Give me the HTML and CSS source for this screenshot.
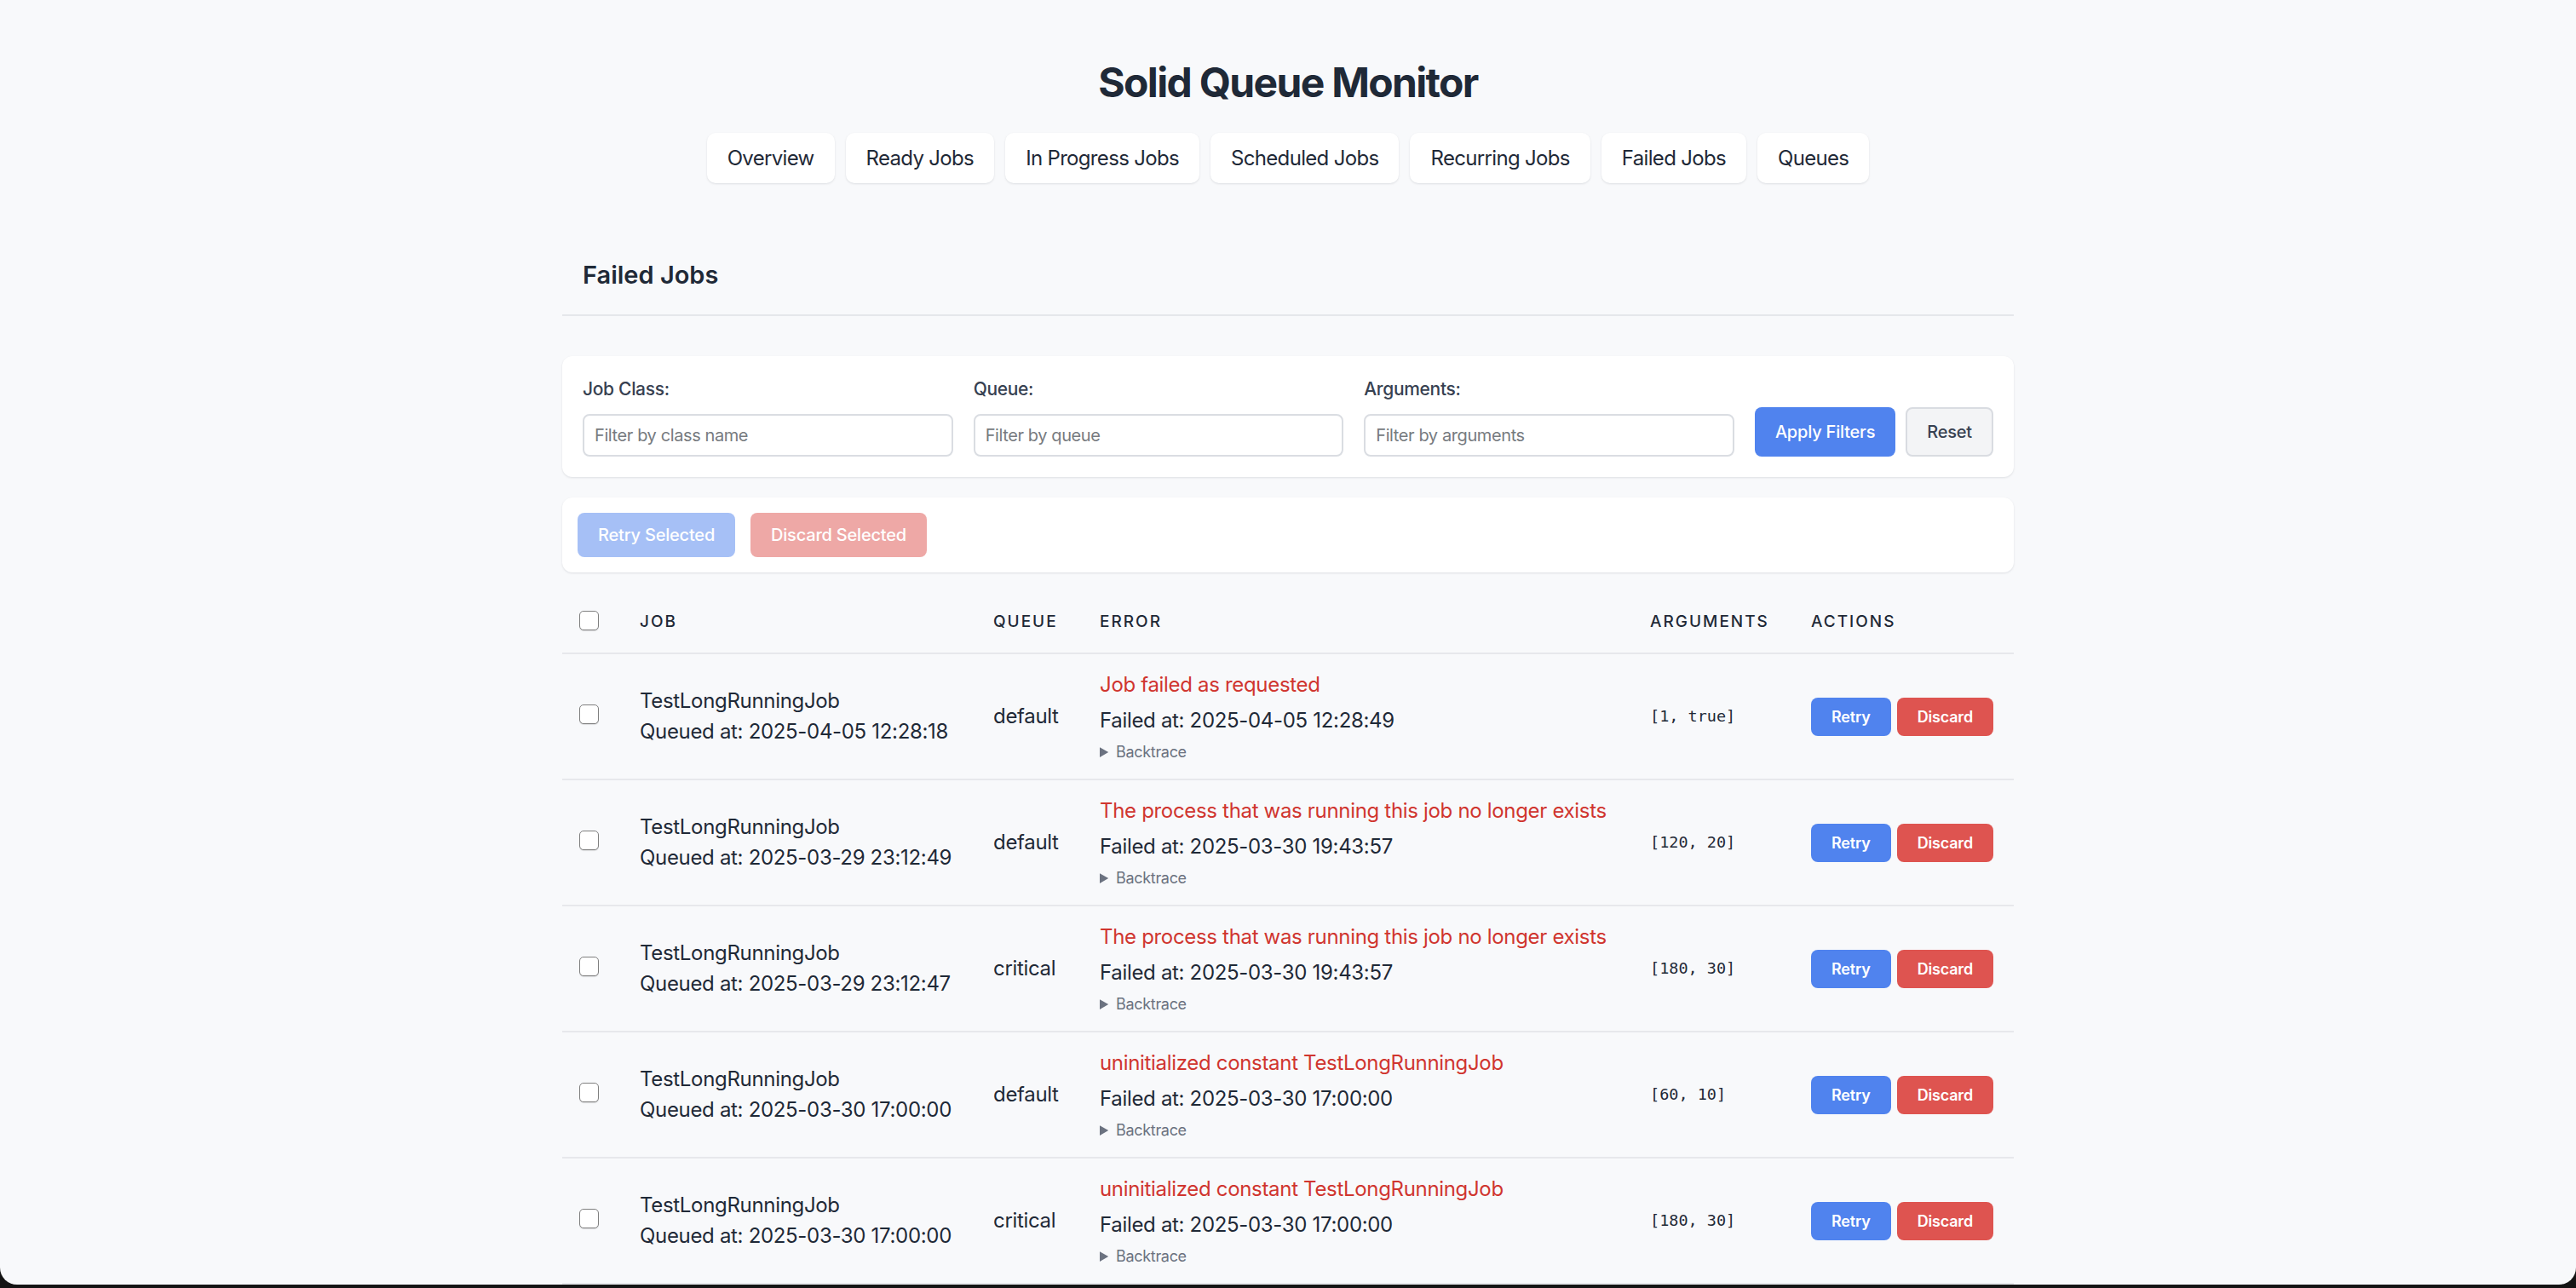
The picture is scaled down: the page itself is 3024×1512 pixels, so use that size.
FILE: index.html
```html
<!DOCTYPE html>
<html lang="en">
<head>
<meta charset="utf-8">
<title>Solid Queue Monitor</title>
<link rel="stylesheet" href="styles.css">
</head>
<body>
<div class="page">
  <header class="app-header">
    <h1 class="app-title">Solid Queue Monitor</h1>
    <nav class="nav">
      <a class="nav-link" href="#">Overview</a>
      <a class="nav-link" href="#">Ready Jobs</a>
      <a class="nav-link" href="#">In Progress Jobs</a>
      <a class="nav-link" href="#">Scheduled Jobs</a>
      <a class="nav-link" href="#">Recurring Jobs</a>
      <a class="nav-link" href="#">Failed Jobs</a>
      <a class="nav-link" href="#">Queues</a>
    </nav>
  </header>

  <section class="section">
    <div class="section-header">
      <h2 class="section-title">Failed Jobs</h2>
    </div>

    <div class="card filter-card">
      <form class="filter-form">
        <div class="filter-group">
          <label class="filter-label">Job Class:</label>
          <input class="filter-input" type="text" placeholder="Filter by class name">
        </div>
        <div class="filter-group">
          <label class="filter-label">Queue:</label>
          <input class="filter-input" type="text" placeholder="Filter by queue">
        </div>
        <div class="filter-group">
          <label class="filter-label">Arguments:</label>
          <input class="filter-input" type="text" placeholder="Filter by arguments">
        </div>
        <div class="filter-actions">
          <button type="button" class="btn btn-apply">Apply Filters</button>
          <button type="button" class="btn btn-reset">Reset</button>
        </div>
      </form>
    </div>

    <div class="card bulk-card">
      <button type="button" class="btn btn-bulk btn-bulk-retry">Retry Selected</button>
      <button type="button" class="btn btn-bulk btn-bulk-discard">Discard Selected</button>
    </div>

    <table class="jobs-table">
      <colgroup>
        <col class="col-check">
        <col class="col-job">
        <col class="col-queue">
        <col class="col-error">
        <col class="col-args">
        <col class="col-actions">
      </colgroup>
      <thead>
        <tr>
          <th class="cell-check"><input type="checkbox" class="checkbox checkbox-head"></th>
          <th>Job</th>
          <th>Queue</th>
          <th>Error</th>
          <th>Arguments</th>
          <th>Actions</th>
        </tr>
      </thead>
      <tbody>
        <tr>
          <td class="cell-check"><input type="checkbox" class="checkbox checkbox-row"></td>
          <td><div>TestLongRunningJob</div><div>Queued at: 2025-04-05 12:28:18</div></td>
          <td>default</td>
          <td>
            <div class="error-message">Job failed as requested</div>
            <div>Failed at: 2025-04-05 12:28:49</div>
            <details class="backtrace"><summary>Backtrace</summary></details>
          </td>
          <td class="args">[1, true]</td>
          <td><div class="row-actions"><button type="button" class="btn btn-sm btn-retry">Retry</button><button type="button" class="btn btn-sm btn-discard">Discard</button></div></td>
        </tr>
        <tr>
          <td class="cell-check"><input type="checkbox" class="checkbox checkbox-row"></td>
          <td><div>TestLongRunningJob</div><div>Queued at: 2025-03-29 23:12:49</div></td>
          <td>default</td>
          <td>
            <div class="error-message">The process that was running this job no longer exists</div>
            <div>Failed at: 2025-03-30 19:43:57</div>
            <details class="backtrace"><summary>Backtrace</summary></details>
          </td>
          <td class="args">[120, 20]</td>
          <td><div class="row-actions"><button type="button" class="btn btn-sm btn-retry">Retry</button><button type="button" class="btn btn-sm btn-discard">Discard</button></div></td>
        </tr>
        <tr>
          <td class="cell-check"><input type="checkbox" class="checkbox checkbox-row"></td>
          <td><div>TestLongRunningJob</div><div>Queued at: 2025-03-29 23:12:47</div></td>
          <td>critical</td>
          <td>
            <div class="error-message">The process that was running this job no longer exists</div>
            <div>Failed at: 2025-03-30 19:43:57</div>
            <details class="backtrace"><summary>Backtrace</summary></details>
          </td>
          <td class="args">[180, 30]</td>
          <td><div class="row-actions"><button type="button" class="btn btn-sm btn-retry">Retry</button><button type="button" class="btn btn-sm btn-discard">Discard</button></div></td>
        </tr>
        <tr>
          <td class="cell-check"><input type="checkbox" class="checkbox checkbox-row"></td>
          <td><div>TestLongRunningJob</div><div>Queued at: 2025-03-30 17:00:00</div></td>
          <td>default</td>
          <td>
            <div class="error-message">uninitialized constant TestLongRunningJob</div>
            <div>Failed at: 2025-03-30 17:00:00</div>
            <details class="backtrace"><summary>Backtrace</summary></details>
          </td>
          <td class="args">[60, 10]</td>
          <td><div class="row-actions"><button type="button" class="btn btn-sm btn-retry">Retry</button><button type="button" class="btn btn-sm btn-discard">Discard</button></div></td>
        </tr>
        <tr>
          <td class="cell-check"><input type="checkbox" class="checkbox checkbox-row"></td>
          <td><div>TestLongRunningJob</div><div>Queued at: 2025-03-30 17:00:00</div></td>
          <td>critical</td>
          <td>
            <div class="error-message">uninitialized constant TestLongRunningJob</div>
            <div>Failed at: 2025-03-30 17:00:00</div>
            <details class="backtrace"><summary>Backtrace</summary></details>
          </td>
          <td class="args">[180, 30]</td>
          <td><div class="row-actions"><button type="button" class="btn btn-sm btn-retry">Retry</button><button type="button" class="btn btn-sm btn-discard">Discard</button></div></td>
        </tr>
      </tbody>
    </table>
  </section>
</div>
<div class="window-edge"></div>
</body>
</html>
```

FILE: styles.css
```css
* { box-sizing: border-box; }

html, body {
  margin: 0;
  padding: 0;
}

body {
  background: #f8f9fb;
  font-family: Inter, "Noto Sans", "Liberation Sans", sans-serif;
  color: #1f2937;
  letter-spacing: -0.02em;
  overflow: hidden;
}

.page {
  width: 1704px;
  margin: 0 auto;
}

/* Header */
.app-header {
  text-align: center;
  padding-top: 68px;
}

.app-title {
  margin: 0;
  font-size: 48px;
  line-height: 58px;
  font-weight: 700;
  letter-spacing: -0.035em;
  color: #1f2937;
}

.nav {
  display: flex;
  justify-content: center;
  gap: 13px;
  margin-top: 30px;
}

.nav-link {
  display: block;
  height: 59px;
  line-height: 59px;
  padding: 0 24px;
  background: #ffffff;
  border-radius: 10px;
  box-shadow: 0 1px 3px rgba(15, 23, 42, 0.08), 0 1px 2px rgba(15, 23, 42, 0.04);
  font-size: 24px;
  letter-spacing: -0.028em;
  color: #1f2937;
  text-decoration: none;
}

/* Section header */
.section-header {
  margin-top: 66px;
  padding: 24px 24px 28px;
  border-bottom: 2px solid #e5e7eb;
}

.section-title {
  margin: 0;
  font-size: 29px;
  line-height: 36px;
  font-weight: 600;
  letter-spacing: 0;
  color: #1f2937;
}

/* Cards */
.card {
  background: #ffffff;
  border-radius: 12px;
  box-shadow: 0 1px 3px rgba(15, 23, 42, 0.08), 0 1px 2px rgba(15, 23, 42, 0.04);
}

.filter-card {
  margin-top: 47px;
  padding: 24px;
}

.filter-form {
  display: flex;
  align-items: flex-end;
  gap: 24px;
}

.filter-group {
  flex: 1;
  display: flex;
  flex-direction: column;
}

.filter-label {
  font-size: 21px;
  line-height: 30px;
  font-weight: 500;
  color: #374151;
  margin-bottom: 14px;
}

.filter-input {
  height: 50px;
  border: 2px solid #dadde2;
  border-radius: 8px;
  padding: 0 12px;
  font-family: inherit;
  font-size: 20px;
  letter-spacing: -0.02em;
  color: #1f2937;
  background: #fff;
}

.filter-input::placeholder {
  color: #777b80;
}

.filter-actions {
  display: flex;
  gap: 12px;
}

.btn {
  font-family: inherit;
  letter-spacing: -0.01em;
  border: none;
  cursor: pointer;
  border-radius: 8px;
  color: #ffffff;
}

.btn-apply {
  height: 58px;
  padding: 0 24px;
  background: #5083ee;
  font-size: 20px;
  font-weight: 500;
}

.btn-reset {
  height: 58px;
  padding: 0 23px;
  background: #f3f4f6;
  border: 2px solid #d9dce1;
  color: #374151;
  font-size: 20px;
  font-weight: 500;
}

/* Bulk actions */
.bulk-card {
  margin-top: 24px;
  padding: 18px;
  display: flex;
  gap: 18px;
}

.btn-bulk {
  height: 52px;
  padding: 0 24px;
  font-size: 20px;
  font-weight: 500;
  opacity: 0.5;
}

.btn-bulk-retry { background: #5083ee; }
.btn-bulk-discard { background: #de5450; }

/* Table */
.jobs-table {
  width: 100%;
  margin-top: 18px;
  border-collapse: collapse;
  table-layout: fixed;
}

.col-check { width: 67px; }
.col-job { width: 415px; }
.col-queue { width: 125px; }
.col-error { width: 646px; }
.col-args { width: 189px; }
.col-actions { width: 262px; }

.jobs-table th {
  text-align: left;
  font-size: 19px;
  line-height: 28px;
  font-weight: 500;
  letter-spacing: 2px;
  text-transform: uppercase;
  color: #1f2937;
  padding: 26px 24px 22px;
  border-bottom: 2px solid #e7e8ec;
  vertical-align: middle;
}

.jobs-table td {
  font-size: 24px;
  line-height: 36px;
  padding: 18px 24px;
  border-bottom: 2px solid #e7e8ec;
  vertical-align: middle;
  white-space: nowrap;
  color: #1f2937;
}

.jobs-table .cell-check {
  padding-left: 20px;
  padding-right: 0;
}

.checkbox {
  appearance: none;
  -webkit-appearance: none;
  display: block;
  width: 23px;
  height: 23px;
  margin: 0;
  border: 1px solid #7f7f7f;
  border-radius: 5px;
  background: #ffffff;
  box-shadow: 0 1px 1px rgba(0, 0, 0, 0.12);
}

.checkbox-head {
  margin-top: -4px;
}

.checkbox-row {
  margin-top: -6px;
}

.error-message {
  color: #d0352f;
  margin-bottom: 6px;
}

.backtrace {
  margin-top: 5px;
  font-size: 18px;
  line-height: 27px;
  color: #6b7280;
}

.jobs-table td.args {
  font-family: "DejaVu Sans Mono", "Liberation Mono", monospace;
  font-size: 18.5px;
  letter-spacing: 0;
}

.row-actions {
  display: flex;
  gap: 7px;
}

.btn-sm {
  height: 45px;
  padding: 0 24px;
  font-size: 18px;
  font-weight: 600;
}

.btn-retry { background: #5083ee; }
.btn-discard { background: #de5450; }

/* macOS window bottom edge */
.window-edge {
  position: fixed;
  top: 0;
  left: 0;
  right: 0;
  bottom: 4px;
  border-radius: 0 0 20px 20px;
  box-shadow: 0 0 0 40px #141414;
  pointer-events: none;
}
```
